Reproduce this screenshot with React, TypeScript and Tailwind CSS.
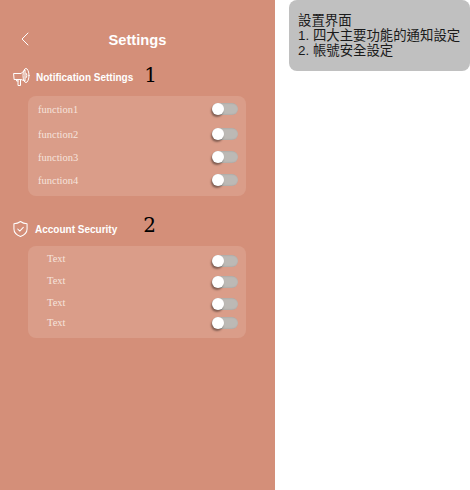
import { ChevronLeft } from 'lucide-react';

const Toggle = () => (
  <div className="relative h-[12px] w-[26px] rounded-full bg-[#bcb9b5] shadow-[inset_1px_0_2px_rgba(0,0,0,0.2)]">
    <div className="absolute left-0 top-0 h-[12px] w-[12px] rounded-full bg-white shadow-[-1px_2px_2px_rgba(0,0,0,0.4)]" />
  </div>
);

const Row = ({ label, className, textClass }: { label: string; className: string; textClass: string }) => (
  <div className={`flex h-[12px] items-center justify-between pr-[8px] ${className}`}>
    <p className={`font-['Liberation_Serif',serif] text-[10.5px] leading-none text-[#f6e3dc] ${textClass}`}>{label}</p>
    <Toggle />
  </div>
);

const MegaphoneIcon = () => (
  <svg width="18" height="18" viewBox="0 0 18 18" fill="none" stroke="white" strokeWidth="1" strokeLinejoin="round" strokeLinecap="round">
    <path d="M1 5.500h7L12 2v11L8 11.500H1.500z" />
    <ellipse cx="13" cy="7.500" rx="3" ry="7" />
    <path d="M3.500 11.500V13H5" />
    <path d="M5 11.500V17.500H7.500V11.500" />
    <path d="M13 5c1.200.8 1.200 4.200 0 5" />
  </svg>
);

const ShieldIcon = () => (
  <svg width="15" height="18" viewBox="0 0 16 18" fill="none" stroke="white" strokeWidth="1.1" strokeLinejoin="round" strokeLinecap="round">
    <path d="M8 1c2 1.500 4.300 2.300 7 2.500v5.500c0 4-3 6.500-7 8-4-1.500-7-4-7-8V3.500C3.700 3.300 6 2.500 8 1z" />
    <path d="M5 9l2.200 2.200L11 7.300" />
  </svg>
);

const App = () => {
  return (
    <div className="flex h-[490px] w-[470px] bg-white font-['Liberation_Sans',sans-serif]">
      <div className="flex h-full w-[275px] flex-col bg-[#d48f79]">
        <div className="relative mt-[31px] flex h-[18px] items-center justify-center">
          <ChevronLeft className="absolute left-[13px] top-[-4px] text-white" size={24} strokeWidth={1} />
          <h1 className="text-[14.7px] font-bold text-white">Settings</h1>
        </div>

        <div className="mt-[17px] flex h-[22px] items-center pl-[13px]">
          <MegaphoneIcon />
          <h2 className="ml-[5px] text-[10px] font-bold text-white">Notification Settings</h2>
          <span className="-mt-[4px] ml-[11px] font-['DejaVu_Serif',serif] text-[20px] leading-none text-black">1</span>
        </div>
        <div className="ml-[28px] mt-[8px] h-[100px] w-[218px] rounded-[8px] bg-[#da9d89] pl-[10px] pt-[7px]">
          <Row label="function1" className="" textClass="pt-[2px]" />
          <Row label="function2" className="mt-[13px]" textClass="pt-[2px]" />
          <Row label="function3" className="mt-[11px]" textClass="pt-[2px]" />
          <Row label="function4" className="mt-[11px]" textClass="pt-[2px]" />
        </div>

        <div className="mt-[22px] flex h-[22px] items-center pl-[13px]">
          <ShieldIcon />
          <h2 className="ml-[7px] text-[10px] font-bold text-white">Account Security</h2>
          <span className="-mt-[9px] ml-[26px] font-['DejaVu_Serif',serif] text-[20px] leading-none text-black">2</span>
        </div>
        <div className="ml-[28px] mt-[6px] h-[92px] w-[218px] rounded-[8px] bg-[#da9d89] pl-[19px] pt-[9px]">
          <Row label="Text" className="" textClass="-mt-[3px]" />
          <Row label="Text" className="mt-[9px]" textClass="-mt-[1px]" />
          <Row label="Text" className="mt-[10px]" textClass="-mt-[1px]" />
          <Row label="Text" className="mt-[7px]" textClass="pt-[1px]" />
        </div>
      </div>

      <div className="ml-[14px] h-[71px] w-[181px] rounded-[8px] bg-[#c0c0c0] pl-[9px] pt-[13px] font-['Liberation_Sans','Noto_Sans_CJK_TC',sans-serif] text-[13.4px] leading-[15px] text-[#1a1a1a]">
        <p>設置界面</p>
        <p>1. 四大主要功能的通知設定</p>
        <p>2. 帳號安全設定</p>
      </div>
    </div>
  );
};

export default App;
